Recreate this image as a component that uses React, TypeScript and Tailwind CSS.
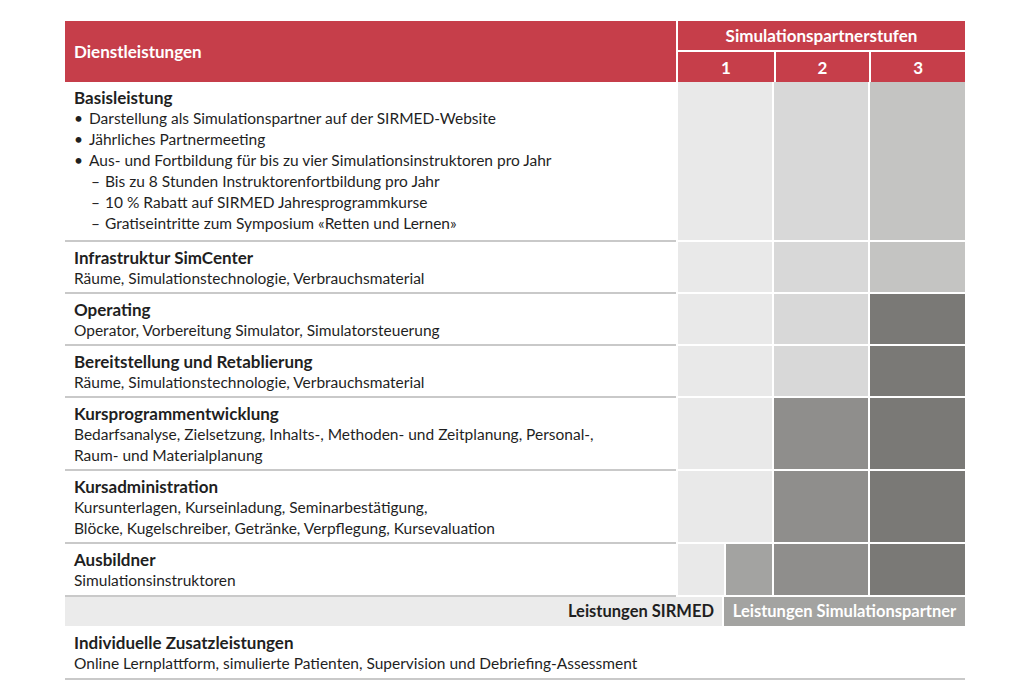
const font = { fontFamily: "Lato, 'Open Sans', sans-serif" };

type Row = {
  title: string;
  lines: string[];
  cells: string[];
  split?: boolean;
};

const L1 = "bg-[#e9e9e9]";
const L2 = "bg-[#d8d8d8]";
const L3 = "bg-[#c4c4c2]";
const M2 = "bg-[#8f8e8c]";
const D3 = "bg-[#7a7976]";

const rows: Row[] = [
  {
    title: "Infrastruktur SimCenter",
    lines: ["Räume, Simulationstechnologie, Verbrauchsmaterial"],
    cells: [L1, L2, L3],
  },
  {
    title: "Operating",
    lines: ["Operator, Vorbereitung Simulator, Simulatorsteuerung"],
    cells: [L1, L2, D3],
  },
  {
    title: "Bereitstellung und Retablierung",
    lines: ["Räume, Simulationstechnologie, Verbrauchsmaterial"],
    cells: [L1, L2, D3],
  },
  {
    title: "Kursprogrammentwicklung",
    lines: [
      "Bedarfsanalyse, Zielsetzung, Inhalts-, Methoden- und Zeitplanung, Personal-,",
      "Raum- und Materialplanung",
    ],
    cells: [L1, M2, D3],
  },
  {
    title: "Kursadministration",
    lines: [
      "Kursunterlagen, Kurseinladung, Seminarbestätigung,",
      "Blöcke, Kugelschreiber, Getränke, Verpflegung, Kursevaluation",
    ],
    cells: [L1, M2, D3],
  },
  {
    title: "Ausbildner",
    lines: ["Simulationsinstruktoren"],
    cells: [L1, M2, D3],
    split: true,
  },
];

const TierCells = ({ cells, split }: { cells: string[]; split?: boolean }) => (
  <>
    {split ? (
      <div className="flex border-l-2 border-b-2 border-white">
        <div className="w-[46px] bg-[#e9e9e9]" />
        <div className="flex-1 border-l-2 border-white bg-[#a3a3a1]" />
      </div>
    ) : (
      <div className={`border-l-2 border-b-2 border-white ${cells[0]}`} />
    )}
    <div className={`border-l-2 border-b-2 border-white ${cells[1]}`} />
    <div className={`border-l-2 border-b-2 border-white ${cells[2]}`} />
  </>
);

export default function App() {
  return (
    <div className="min-h-screen bg-white pt-[21px] text-[15.5px] leading-[21px] text-[#1f1f1f]" style={font}>
      <div className="ml-[65px] w-[900px]">
        {/* Header */}
        <div className="flex h-[61px] bg-[#c63e4a] text-[17px] font-bold text-white">
          <div className="flex w-[611px] items-center pl-[9px]">Dienstleistungen</div>
          <div className="flex flex-1 flex-col border-l-2 border-white">
            <div className="flex h-[31px] items-center justify-center border-b-2 border-white">
              Simulationspartnerstufen
            </div>
            <div className="grid flex-1 grid-cols-3">
              <div className="flex items-center justify-center">1</div>
              <div className="flex items-center justify-center border-l-2 border-white">2</div>
              <div className="flex items-center justify-center border-l-2 border-white">3</div>
            </div>
          </div>
        </div>

        {/* Body */}
        <div className="grid grid-cols-[611px_96px_96px_97px]">
          <div className="border-b-2 border-[#c9c9c9] pl-[9px] pt-[5px] pb-[6px]">
            <div className="text-[17px] font-bold">Basisleistung</div>
            <ul>
              <li className="flex gap-[6px]"><span>•</span>Darstellung als Simulationspartner auf der SIRMED-Website</li>
              <li className="flex gap-[6px]"><span>•</span>Jährliches Partnermeeting</li>
              <li className="flex gap-[6px]"><span>•</span>Aus- und Fortbildung für bis zu vier Simulationsinstruktoren pro Jahr</li>
              <li className="flex gap-[5px] pl-[17px]"><span>–</span>Bis zu 8 Stunden Instruktorenfortbildung pro Jahr</li>
              <li className="flex gap-[5px] pl-[17px]"><span>–</span>10 % Rabatt auf SIRMED Jahresprogrammkurse</li>
              <li className="flex gap-[5px] pl-[17px]"><span>–</span>Gratiseintritte zum Symposium «Retten und Lernen»</li>
            </ul>
          </div>
          <TierCells cells={[L1, L2, L3]} />

          {rows.map((r) => (
            <>
              <div
                key={r.title}
                className={`border-b-2 border-[#c9c9c9] pl-[9px] pt-[5px] ${r.split ? "pb-[4px]" : "pb-[3px]"}`}
              >
                <div className="text-[17px] font-bold">{r.title}</div>
                {r.lines.map((l) => (
                  <div key={l}>{l}</div>
                ))}
              </div>
              <TierCells cells={r.cells} split={r.split} />
            </>
          ))}
        </div>

        {/* Legend bar */}
        <div className="flex h-[29px] text-[16.5px] font-bold">
          <div className="flex w-[657px] items-center justify-end bg-[#ebebeb] pr-[8px]">Leistungen SIRMED</div>
          <div className="flex flex-1 items-center justify-center border-l-2 border-white bg-[#a3a3a1] text-white">
            Leistungen Simulationspartner
          </div>
        </div>

        <div className="border-b-2 border-[#c9c9c9] pl-[9px] pt-[6px] pb-[4px]">
          <div className="text-[17px] font-bold">Individuelle Zusatzleistungen</div>
          <div>Online Lernplattform, simulierte Patienten, Supervision und Debriefing-Assessment</div>
        </div>
      </div>
    </div>
  );
}
